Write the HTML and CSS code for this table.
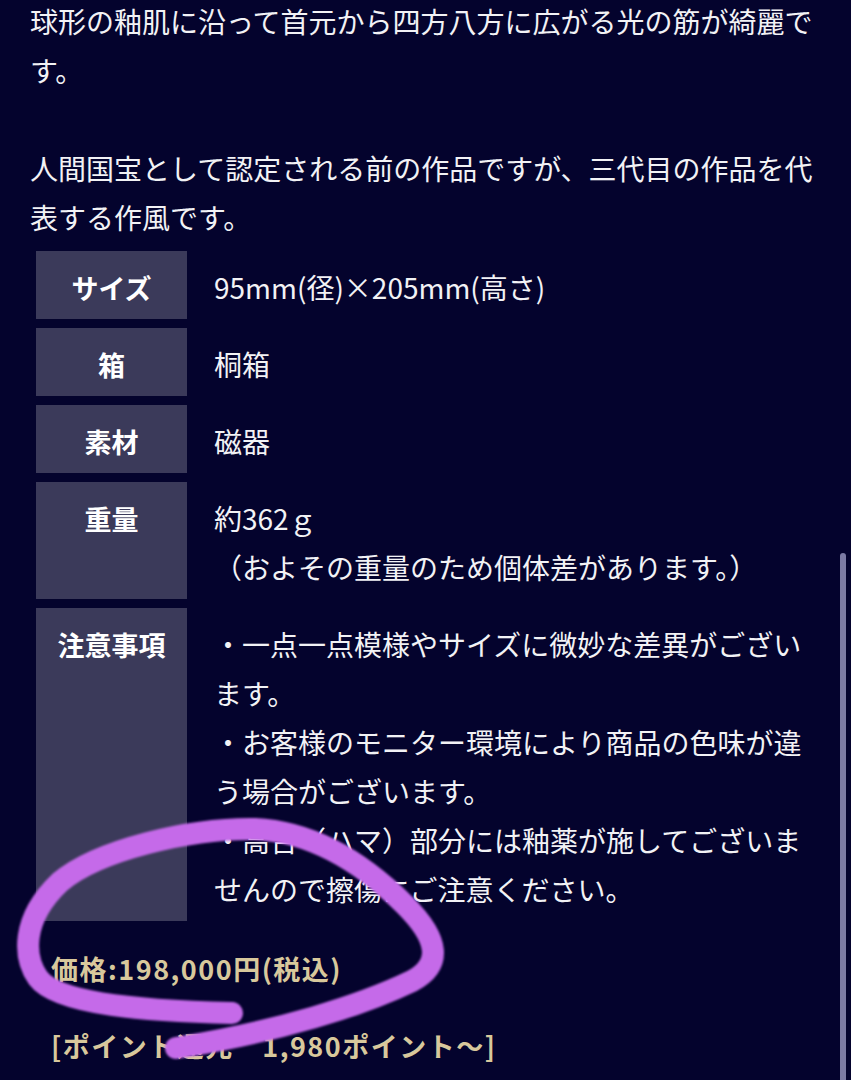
FILE: index.html
```html
<!DOCTYPE html>
<html lang="ja">
<head>
  <meta charset="UTF-8" />
  <meta name="viewport" content="width=device-width, initial-scale=1.0" />
  <title>商品詳細</title>
  <link rel="stylesheet" href="styles.css">
</head>
<body>
  <div class="page">
    <p class="desc">
      球形の釉肌に沿って首元から四方八方に広がる光の筋が綺麗です。<br><br>
      人間国宝として認定される前の作品ですが、三代目の作品を代表する作風です。
    </p>

    <div class="specs">
      <div class="spec-row">
        <div class="spec-label">サイズ</div>
        <div class="spec-value">95mm(径)×205mm(高さ)</div>
      </div>
      <div class="spec-row">
        <div class="spec-label">箱</div>
        <div class="spec-value">桐箱</div>
      </div>
      <div class="spec-row">
        <div class="spec-label">素材</div>
        <div class="spec-value">磁器</div>
      </div>
      <div class="spec-row">
        <div class="spec-label">重量</div>
        <div class="spec-value">約362ｇ<br>（およその重量のため個体差があります。）</div>
      </div>
      <div class="spec-row">
        <div class="spec-label">注意事項</div>
        <div class="spec-value">・一点一点模様やサイズに微妙な差異がございます。<br>・お客様のモニター環境により商品の色味が違う場合がございます。<br>・高台（ハマ）部分には釉薬が施してございませんので擦傷にご注意ください。</div>
      </div>
    </div>

    <p class="price">価格:198,000円(税込)</p>
    <p class="points">[ポイント還元　1,980ポイント～]</p>
  </div>

  <!-- hand-drawn marker circling the price -->
  <svg class="marker" width="851" height="1080" viewBox="0 0 851 1080">
    <defs>
      <filter id="soft" x="-10%" y="-10%" width="120%" height="120%">
        <feGaussianBlur stdDeviation="1.2" />
      </filter>
    </defs>
    <path d="M232,1013 C150,1011 58,1005 38,978 C24,958 20,920 60,882 C98,850 190,828 255,829 C320,832 370,870 405,905 C440,940 442,965 412,981 C360,1006 280,1031 176,1048"
          fill="none" stroke="#c56be9" stroke-width="22" stroke-linecap="round" stroke-linejoin="round" filter="url(#soft)" />
  </svg>

  <div class="scroll-indicator"></div>
</body>
</html>
```

FILE: styles.css
```css
* {
  margin: 0;
  padding: 0;
  box-sizing: border-box;
}

body {
  font-family: "Noto Sans CJK JP", "Noto Sans", sans-serif;
  background: #04032d;
  color: #f2f2f5;
  min-height: 100vh;
  overflow: hidden;
}

.page {
  padding: 0 29px 0 30px;
  margin-top: -3px;
}

.desc {
  font-size: 28px;
  line-height: 49px;
}

.specs {
  display: flex;
  flex-direction: column;
  gap: 9px;
  margin: 9px 0 0 6px;
}

.spec-row {
  display: flex;
}

.spec-label {
  flex: 0 0 151px;
  background: #3b3a5a;
  text-align: center;
  font-size: 27px;
  font-weight: 700;
  line-height: 49px;
  padding: 12px 0 7px;
  color: #ffffff;
}

.spec-value {
  flex: 1;
  padding: 12px 0 7px 27px;
  font-size: 28px;
  line-height: 49px;
}

.price,
.points {
  color: #d8c89c;
  font-size: 27px;
  font-weight: 700;
  letter-spacing: 1.5px;
  margin-left: 21px;
}

.price {
  margin-top: 28px;
}

.points {
  margin-top: 38px;
}

.marker {
  position: absolute;
  top: 0;
  left: 0;
  pointer-events: none;
}

.scroll-indicator {
  position: absolute;
  top: 553px;
  right: 5px;
  width: 6px;
  height: 540px;
  border-radius: 3px;
  background: #7c7ba4;
}
```
